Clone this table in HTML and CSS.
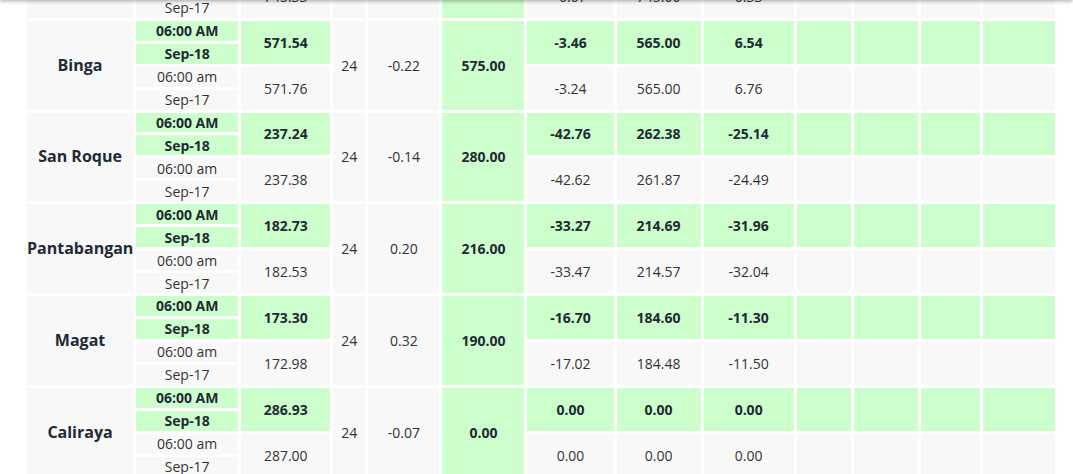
FILE: index.html
```html
<!DOCTYPE html>
<html>
<head>
<meta charset="utf-8">
<link rel="stylesheet" href="styles.css">
</head>
<body>
<div class="topbar"></div>
<div class="wrap">
<table class="dams">
<colgroup>
<col class="c-name"><col class="c-time"><col class="c-val"><col class="c-hr"><col class="c-chg"><col class="c-nhwl"><col class="c-dev"><col class="c-rule"><col class="c-dev2"><col class="c-e1"><col class="c-e2"><col class="c-e3"><col class="c-e4">
</colgroup>
<tbody>
<tr>
<td rowspan="4" class="name">Ambuklao</td>
<td class="g b">06:00 AM</td>
<td rowspan="2" class="g b">745.21</td>
<td rowspan="4">24</td>
<td rowspan="4">-0.12</td>
<td rowspan="4" class="g b">752.00</td>
<td rowspan="2" class="g b">-6.79</td>
<td rowspan="2" class="g b">745.00</td>
<td rowspan="2" class="g b">0.21</td>
<td rowspan="2" class="g"></td><td rowspan="2" class="g"></td><td rowspan="2" class="g"></td><td rowspan="2" class="g"></td>
</tr>
<tr><td class="g b">Sep-18</td></tr>
<tr>
<td>06:00 am</td>
<td rowspan="2">745.33</td>
<td rowspan="2">-6.67</td>
<td rowspan="2">745.00</td>
<td rowspan="2">0.33</td>
<td rowspan="2"></td><td rowspan="2"></td><td rowspan="2"></td><td rowspan="2"></td>
</tr>
<tr><td>Sep-17</td></tr>

<tr>
<td rowspan="4" class="name">Binga</td>
<td class="g b">06:00 AM</td>
<td rowspan="2" class="g b">571.54</td>
<td rowspan="4">24</td>
<td rowspan="4">-0.22</td>
<td rowspan="4" class="g b">575.00</td>
<td rowspan="2" class="g b">-3.46</td>
<td rowspan="2" class="g b">565.00</td>
<td rowspan="2" class="g b">6.54</td>
<td rowspan="2" class="g"></td><td rowspan="2" class="g"></td><td rowspan="2" class="g"></td><td rowspan="2" class="g"></td>
</tr>
<tr><td class="g b">Sep-18</td></tr>
<tr>
<td>06:00 am</td>
<td rowspan="2">571.76</td>
<td rowspan="2">-3.24</td>
<td rowspan="2">565.00</td>
<td rowspan="2">6.76</td>
<td rowspan="2"></td><td rowspan="2"></td><td rowspan="2"></td><td rowspan="2"></td>
</tr>
<tr><td>Sep-17</td></tr>

<tr>
<td rowspan="4" class="name">San Roque</td>
<td class="g b">06:00 AM</td>
<td rowspan="2" class="g b">237.24</td>
<td rowspan="4">24</td>
<td rowspan="4">-0.14</td>
<td rowspan="4" class="g b">280.00</td>
<td rowspan="2" class="g b">-42.76</td>
<td rowspan="2" class="g b">262.38</td>
<td rowspan="2" class="g b">-25.14</td>
<td rowspan="2" class="g"></td><td rowspan="2" class="g"></td><td rowspan="2" class="g"></td><td rowspan="2" class="g"></td>
</tr>
<tr><td class="g b">Sep-18</td></tr>
<tr>
<td>06:00 am</td>
<td rowspan="2">237.38</td>
<td rowspan="2">-42.62</td>
<td rowspan="2">261.87</td>
<td rowspan="2">-24.49</td>
<td rowspan="2"></td><td rowspan="2"></td><td rowspan="2"></td><td rowspan="2"></td>
</tr>
<tr><td>Sep-17</td></tr>

<tr>
<td rowspan="4" class="name">Pantabangan</td>
<td class="g b">06:00 AM</td>
<td rowspan="2" class="g b">182.73</td>
<td rowspan="4">24</td>
<td rowspan="4">0.20</td>
<td rowspan="4" class="g b">216.00</td>
<td rowspan="2" class="g b">-33.27</td>
<td rowspan="2" class="g b">214.69</td>
<td rowspan="2" class="g b">-31.96</td>
<td rowspan="2" class="g"></td><td rowspan="2" class="g"></td><td rowspan="2" class="g"></td><td rowspan="2" class="g"></td>
</tr>
<tr><td class="g b">Sep-18</td></tr>
<tr>
<td>06:00 am</td>
<td rowspan="2">182.53</td>
<td rowspan="2">-33.47</td>
<td rowspan="2">214.57</td>
<td rowspan="2">-32.04</td>
<td rowspan="2"></td><td rowspan="2"></td><td rowspan="2"></td><td rowspan="2"></td>
</tr>
<tr><td>Sep-17</td></tr>

<tr>
<td rowspan="4" class="name">Magat</td>
<td class="g b">06:00 AM</td>
<td rowspan="2" class="g b">173.30</td>
<td rowspan="4">24</td>
<td rowspan="4">0.32</td>
<td rowspan="4" class="g b">190.00</td>
<td rowspan="2" class="g b">-16.70</td>
<td rowspan="2" class="g b">184.60</td>
<td rowspan="2" class="g b">-11.30</td>
<td rowspan="2" class="g"></td><td rowspan="2" class="g"></td><td rowspan="2" class="g"></td><td rowspan="2" class="g"></td>
</tr>
<tr><td class="g b">Sep-18</td></tr>
<tr>
<td>06:00 am</td>
<td rowspan="2">172.98</td>
<td rowspan="2">-17.02</td>
<td rowspan="2">184.48</td>
<td rowspan="2">-11.50</td>
<td rowspan="2"></td><td rowspan="2"></td><td rowspan="2"></td><td rowspan="2"></td>
</tr>
<tr><td>Sep-17</td></tr>

<tr>
<td rowspan="4" class="name">Caliraya</td>
<td class="g b">06:00 AM</td>
<td rowspan="2" class="g b">286.93</td>
<td rowspan="4">24</td>
<td rowspan="4">-0.07</td>
<td rowspan="4" class="g b">0.00</td>
<td rowspan="2" class="g b">0.00</td>
<td rowspan="2" class="g b">0.00</td>
<td rowspan="2" class="g b">0.00</td>
<td rowspan="2" class="g"></td><td rowspan="2" class="g"></td><td rowspan="2" class="g"></td><td rowspan="2" class="g"></td>
</tr>
<tr><td class="g b">Sep-18</td></tr>
<tr>
<td>06:00 am</td>
<td rowspan="2">287.00</td>
<td rowspan="2">0.00</td>
<td rowspan="2">0.00</td>
<td rowspan="2">0.00</td>
<td rowspan="2"></td><td rowspan="2"></td><td rowspan="2"></td><td rowspan="2"></td>
</tr>
<tr><td>Sep-17</td></tr>
</tbody>
</table>
</div>
</body>
</html>
```
FILE: styles.css
```css
html, body {
  margin: 0;
  padding: 0;
  background: #ffffff;
}
body {
  font-family: "Open Sans", "Liberation Sans", sans-serif;
  font-size: 14px;
  color: #333333;
  overflow: hidden;
}
.topbar {
  position: fixed;
  top: -20px;
  left: 0;
  right: 0;
  height: 20px;
  background: #ffffff;
  box-shadow: 0 1px 4px rgba(0, 0, 0, 0.35);
  z-index: 5;
}
.wrap {
  padding-left: 24px;
  margin-top: -74px;
}
.dams {
  table-layout: fixed;
  width: 1034px;
  border-collapse: separate;
  border-spacing: 3px;
}
.c-name { width: 106px; }
.c-time { width: 102px; }
.c-val { width: 89px; }
.c-hr { width: 32px; }
.c-chg { width: 71px; }
.c-nhwl { width: 82px; }
.c-dev { width: 86px; }
.c-rule { width: 84px; }
.c-dev2 { width: 90px; }
.c-e1 { width: 54px; }
.c-e2 { width: 64px; }
.c-e3 { width: 59px; }
.c-e4 { width: 72px; }
.dams td {
  background: #f8f8f8;
  height: 19.94px;
  padding: 0;
  line-height: 19px;
  text-align: center;
  vertical-align: middle;
  white-space: nowrap;
}
.dams td.g {
  background: #ccffcc;
}
.dams td.b {
  font-weight: 700;
  color: #222a35;
}
.dams td.name {
  font-size: 16px;
  font-weight: 700;
  color: #222a35;
}
```
